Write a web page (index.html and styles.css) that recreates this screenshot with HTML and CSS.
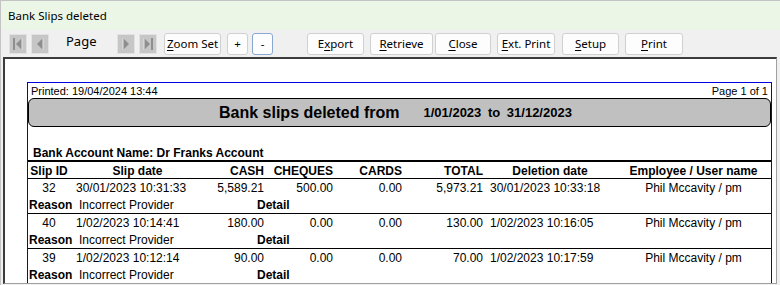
FILE: index.html
```html
<!DOCTYPE html>
<html lang="en">
<head>
    <meta charset="UTF-8">
    <title>Bank Slips deleted</title>
    <link rel="stylesheet" href="styles.css">
</head>
<body>
    <div class="window">
        <div class="titlebar">Bank Slips deleted</div>

        <div class="toolbar">
            <span class="nav-btn">
                <svg width="16" height="18" viewBox="0 0 16 18"><rect x="3" y="3" width="2" height="12" fill="#8e8e8e"/><path d="M12 3 L6 9 L12 15 Z" fill="#8e8e8e"/><path d="M12 3 L12 15" stroke="#e4e4e4" stroke-width="1"/></svg>
            </span>
            <span class="nav-btn">
                <svg width="16" height="18" viewBox="0 0 16 18"><path d="M11 3 L5 9 L11 15 Z" fill="#8e8e8e"/><path d="M11 3 L11 15" stroke="#e4e4e4" stroke-width="1"/></svg>
            </span>
            <span class="page-label">Page</span>
            <span class="nav-btn">
                <svg width="16" height="18" viewBox="0 0 16 18"><path d="M5 3 L11 9 L5 15 Z" fill="#8e8e8e"/><path d="M5 3 L5 15" stroke="#e4e4e4" stroke-width="1"/></svg>
            </span>
            <span class="nav-btn">
                <svg width="16" height="18" viewBox="0 0 16 18"><path d="M4 3 L10 9 L4 15 Z" fill="#8e8e8e"/><path d="M4 3 L4 15" stroke="#e4e4e4" stroke-width="1"/><rect x="11" y="3" width="2" height="12" fill="#8e8e8e"/></svg>
            </span>
            <button class="btn btn-zoom"><u>Z</u>oom Set</button>
            <button class="btn btn-plus">+</button>
            <button class="btn btn-minus">-</button>
            <button class="btn btn-export">E<u>x</u>port</button>
            <button class="btn btn-retrieve"><u>R</u>etrieve</button>
            <button class="btn btn-close"><u>C</u>lose</button>
            <button class="btn btn-ext"><u>E</u>xt. Print</button>
            <button class="btn btn-setup"><u>S</u>etup</button>
            <button class="btn btn-print"><u>P</u>rint</button>
        </div>

        <div class="preview">
            <div class="page">
                <div class="page-top">
                    <span>Printed: 19/04/2024 13:44</span>
                    <span>Page 1 of 1</span>
                </div>
                <div class="banner">
                    <span class="banner-title">Bank slips deleted from</span>
                    <span class="banner-dates">1/01/2023 to 31/12/2023</span>
                </div>
                <div class="account">Bank Account Name: Dr Franks Account</div>

                <div class="row head">
                    <span class="c">Slip ID</span>
                    <span class="c">Slip date</span>
                    <span class="r">CASH</span>
                    <span class="r">CHEQUES</span>
                    <span class="r">CARDS</span>
                    <span class="r">TOTAL</span>
                    <span class="c">Deletion date</span>
                    <span class="c">Employee / User name</span>
                </div>

                <div class="record">
                    <div class="row">
                        <span class="c">32</span>
                        <span class="l">30/01/2023 10:31:33</span>
                        <span class="r">5,589.21</span>
                        <span class="r">500.00</span>
                        <span class="r">0.00</span>
                        <span class="r">5,973.21</span>
                        <span class="l">30/01/2023 10:33:18</span>
                        <span class="c">Phil Mccavity / pm</span>
                    </div>
                    <div class="reason">
                        <b class="reason-label">Reason</b>
                        <span class="reason-text">Incorrect Provider</span>
                        <b>Detail</b>
                    </div>
                </div>

                <div class="record">
                    <div class="row">
                        <span class="c">40</span>
                        <span class="l">1/02/2023 10:14:41</span>
                        <span class="r">180.00</span>
                        <span class="r">0.00</span>
                        <span class="r">0.00</span>
                        <span class="r">130.00</span>
                        <span class="l">1/02/2023 10:16:05</span>
                        <span class="c">Phil Mccavity / pm</span>
                    </div>
                    <div class="reason">
                        <b class="reason-label">Reason</b>
                        <span class="reason-text">Incorrect Provider</span>
                        <b>Detail</b>
                    </div>
                </div>

                <div class="record">
                    <div class="row">
                        <span class="c">39</span>
                        <span class="l">1/02/2023 10:12:14</span>
                        <span class="r">90.00</span>
                        <span class="r">0.00</span>
                        <span class="r">0.00</span>
                        <span class="r">70.00</span>
                        <span class="l">1/02/2023 10:17:59</span>
                        <span class="c">Phil Mccavity / pm</span>
                    </div>
                    <div class="reason">
                        <b class="reason-label">Reason</b>
                        <span class="reason-text">Incorrect Provider</span>
                        <b>Detail</b>
                    </div>
                </div>
            </div>
        </div>
    </div>
</body>
</html>
```

FILE: styles.css
```css
body {
    margin: 0;
    overflow: hidden;
    background: #f0f0f0;
}
.window {
    width: 780px;
    height: 285px;
    box-sizing: border-box;
    border-left: 1px solid #c4c4c4;
    border-top: 1px solid #c4c4c4;
    display: flex;
    flex-direction: column;
    font-family: 'Noto Sans', sans-serif;
    color: #000;
}
.titlebar {
    height: 29px;
    line-height: 29px;
    padding-left: 7px;
    background-color: #ebf6e7;
    font-size: 11.5px;
}
.toolbar {
    height: 27px;
    box-sizing: border-box;
    display: flex;
    align-items: center;
    padding-left: 8px;
    background-color: #f0f0f0;
}
.nav-btn {
    width: 16px;
    height: 18px;
    border: 1px solid #e2e2e2;
    background-color: #c6c6c6;
    margin-right: 4px;
    display: flex;
}
.nav-btn + .nav-btn {
    margin-right: 3px;
}
.page-label {
    font-size: 13px;
    width: 65px;
    padding-left: 14px;
    box-sizing: border-box;
    margin-top: -6px;
}
.btn {
    height: 22px;
    box-sizing: border-box;
    padding: 0;
    background-color: #fdfdfd;
    border: 1px solid #d0d0d0;
    border-radius: 3px;
    font-family: 'Noto Sans', sans-serif;
    font-size: 11.5px;
    color: #000;
    margin-right: 6px;
}
.btn u {
    text-decoration-thickness: 1px;
    text-underline-offset: 2px;
}
.btn-zoom {
    width: 57px;
    margin-left: 4px;
}
.btn-plus {
    width: 21px;
    margin-right: 4px;
}
.btn-minus {
    width: 21px;
    margin-right: 34px;
    border-color: #88a8d0;
}
.btn-export {
    width: 57px;
}
.btn-retrieve {
    width: 63px;
    margin-right: 2px;
}
.btn-close {
    width: 56px;
}
.btn-ext {
    width: 58px;
    margin-right: 7px;
}
.btn-setup {
    width: 57px;
}
.btn-print {
    width: 58px;
}
.preview {
    flex: 1;
    margin: 0 3px 1px 2px;
    border-top: 2px solid #3c3c3c;
    border-left: 2px solid #3c3c3c;
    border-right: 1px solid #a0a0a0;
    border-bottom: 1px solid #a0a0a0;
    background-color: #fff;
    padding: 23px 0 0 22px;
    overflow: hidden;
}
.page {
    width: 745px;
    box-sizing: border-box;
    border: 1px solid #0000e0;
    border-bottom: none;
    font-family: 'Liberation Sans', Arial, sans-serif;
    font-size: 12px;
    height: 300px;
}
.page-top {
    display: flex;
    justify-content: space-between;
    font-size: 11px;
    height: 15px;
    line-height: 16px;
    padding: 0 3px 0 3px;
}
.banner {
    height: 29px;
    box-sizing: border-box;
    border: 1px solid #000;
    border-radius: 6px;
    background-color: #c0c0c0;
    display: flex;
    align-items: center;
    padding-left: 190px;
    font-weight: bold;
}
.banner-title {
    font-size: 16px;
    margin-right: 24px;
}
.banner-dates {
    font-size: 13px;
    word-spacing: 3px;
}
.account {
    font-weight: bold;
    height: 35px;
    box-sizing: border-box;
    padding: 18px 0 0 5px;
    line-height: 16px;
    border-bottom: 2px solid #000;
}
.row {
    display: grid;
    grid-template-columns: 42px 135px 60px 69px 69px 81px 132px 1fr;
    height: 17px;
    line-height: 19px;
}
.row.head {
    height: 16px;
    line-height: 19px;
    font-weight: bold;
    border-bottom: 1px solid #000;
}
.row .c {
    text-align: center;
}
.row .r {
    text-align: right;
    padding-right: 1px;
}
.row .l {
    padding-left: 6px;
}
.record {
    border-bottom: 1px solid #000;
}
.reason {
    display: flex;
    height: 17px;
    line-height: 18px;
}
.reason-label {
    width: 50px;
    padding-left: 1px;
}
.reason-text {
    width: 178px;
}
```
